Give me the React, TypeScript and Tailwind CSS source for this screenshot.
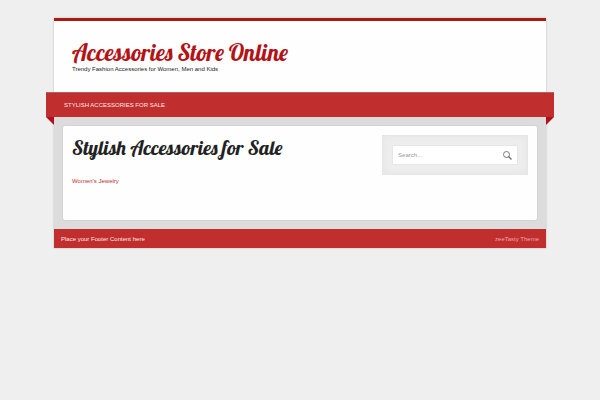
function Header() {
   return (
      <header className="border-t-[3px] border-[#a81a14] bg-[#fefefe] px-[18px] pt-5 pb-[19px]">
         <h1 className="font-['Lobster','Liberation_Serif',serif] text-[23px] leading-6 font-normal whitespace-nowrap text-[#b31217]">
            <a href="#">Accessories Store Online</a>
         </h1>
         <p className="text-[6px] leading-2 text-[#222]">
            Trendy Fashion Accessories for Women, Men and Kids
         </p>
      </header>
   )
}

function Navbar() {
   return (
      <div className="relative -mx-2">
         <nav className="flex h-[25px] items-center border-t border-[#b5605e] bg-[#c12e2e] px-[18px]">
            <a href="#" className="text-[6px] leading-2 text-[#fbe9e9] uppercase">
               Stylish Accessories for Sale
            </a>
         </nav>
         {/* ribbon folds */}
         <div className="absolute top-full left-0 size-2 bg-[#b30f18] [clip-path:polygon(0_0,100%_0,100%_100%)]" />
         <div className="absolute top-full right-0 size-2 bg-[#b30f18] [clip-path:polygon(0_0,100%_0,0_100%)]" />
      </div>
   )
}

function SearchBox() {
   return (
      <form className="border border-[#e6e6e6] bg-[#eeeeee] p-[9px] shadow-[inset_0_0_8px_#e4e4e4]">
         <div className="flex h-5 items-center border border-[#e6e6e6] bg-white px-[5px]">
            <input
               type="text"
               aria-label="Search"
               placeholder="Search..."
               className="min-w-0 flex-1 text-[6px] leading-2 outline-none placeholder:text-[#999]"
            />
            <button type="submit" aria-label="Submit search">
               <svg className="size-[9px] text-[#777]" viewBox="0 0 18 18" fill="none" stroke="currentColor">
                  <circle cx="7" cy="7" r="6" strokeWidth="2" />
                  <path d="M11 11l6 6" strokeWidth="3" />
               </svg>
            </button>
         </div>
      </form>
   )
}

function Footer() {
   return (
      <footer className="flex h-[19px] items-center justify-between bg-[#c12e2e] px-[7px] text-[6px] leading-2">
         <p className="text-[#fbe9e9]">Place your Footer Content here</p>
         <a href="#" className="text-[#e9a9a9]">
            zeeTasty Theme
         </a>
      </footer>
   )
}

export default function App() {
   return (
      <div className="min-h-screen bg-[#efefef] pt-[18px] font-['Liberation_Sans',Arial,sans-serif]">
         <div className="mx-auto w-[82%] shadow-[0_0_2px_#bbb]">
            <Header />
            <Navbar />
            <div className="bg-[#dcdcdc] p-2">
               <div className="flex min-h-24 items-start justify-between rounded-[3px] border border-[#d2d4d4] bg-[#fefefe] px-[9px] pt-[9px]">
                  <main>
                     <h2 className="font-['Lobster','Liberation_Serif',serif] text-[20px] leading-[26px] font-normal whitespace-nowrap text-[#222]">
                        Stylish Accessories for Sale
                     </h2>
                     <p className="mt-4 text-[6px] leading-2">
                        <a href="#" className="text-[#c12e2e]">
                           Women’s Jewelry
                        </a>
                     </p>
                  </main>
                  <aside className="w-[32%]">
                     <SearchBox />
                  </aside>
               </div>
            </div>
            <Footer />
         </div>
      </div>
   )
}
